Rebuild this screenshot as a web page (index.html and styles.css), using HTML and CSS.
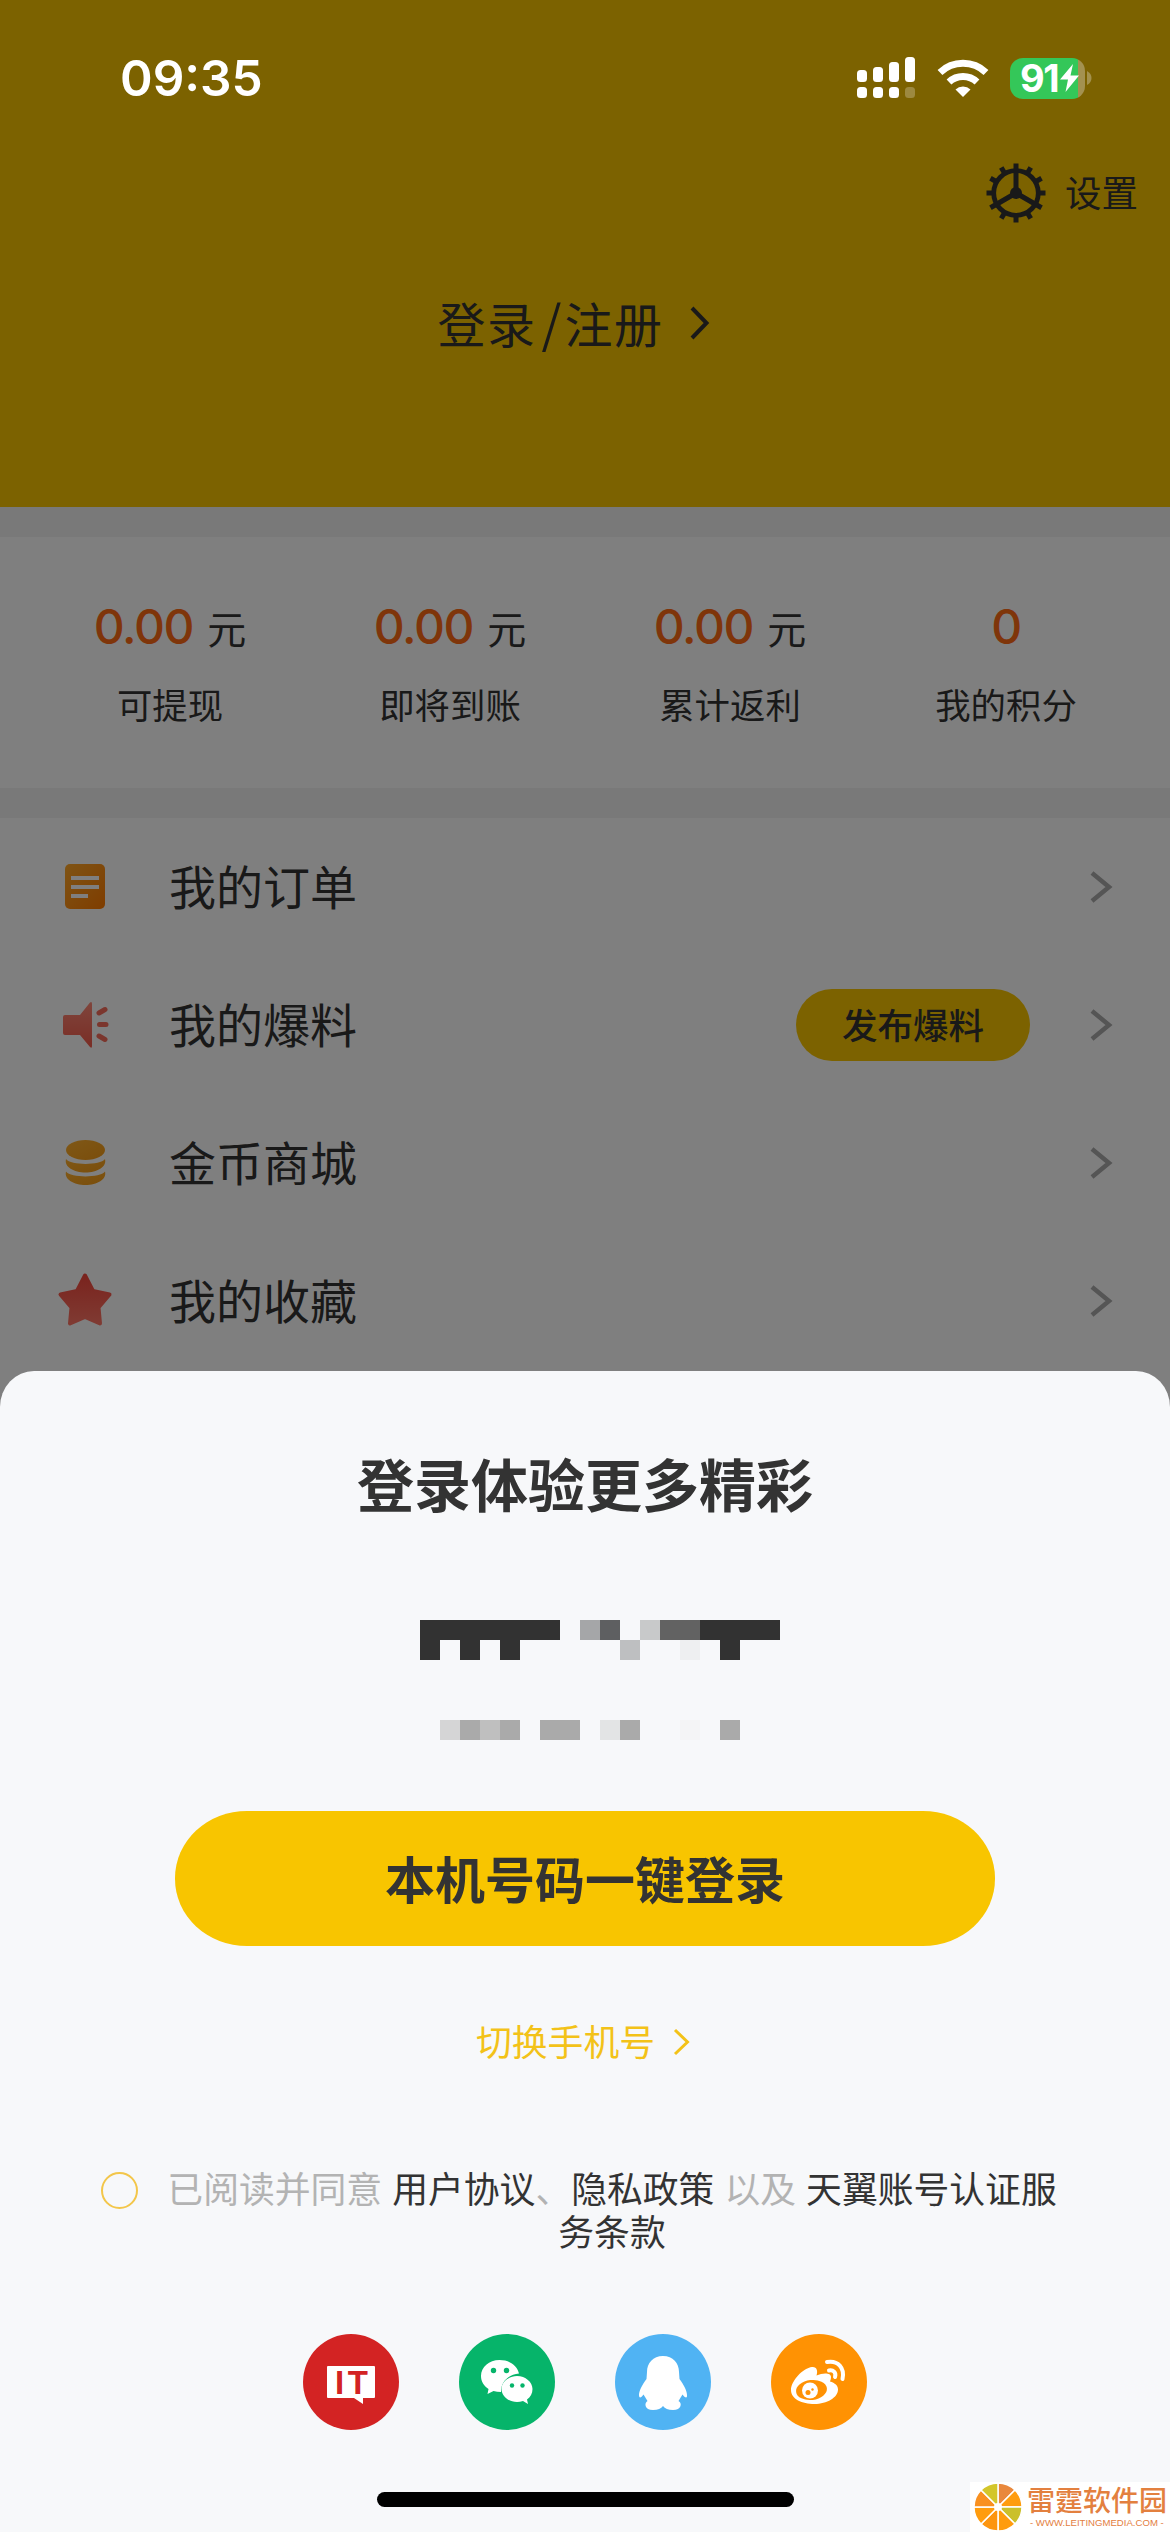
FILE: index.html
```html
<!DOCTYPE html>
<html lang="zh-CN">
<head>
<meta charset="utf-8">
<title>我的</title>
<link rel="stylesheet" href="styles.css">
</head>
<body>
<div class="phone">
  <main class="page">
    <header class="profile">
      <div class="settings">
        <svg class="gear" width="60" height="60" viewBox="-30 -30 60 60">
          <circle r="22.3" fill="none" stroke="#333" stroke-width="4.8"/>
          <g stroke="#333" stroke-width="5">
            <path d="M0-23V-29.5M0 23V29.5M23 0H29.5M-23 0H-29.5"/>
            <path transform="rotate(30)" d="M0-23V-29.5M0 23V29.5M23 0H29.5M-23 0H-29.5"/>
            <path transform="rotate(60)" d="M0-23V-29.5M0 23V29.5M23 0H29.5M-23 0H-29.5"/>
            <path d="M0 0V-22M0 0L19 11M0 0L-19 11"/>
          </g>
          <circle r="6" fill="#333"/>
        </svg>
        <span>设置</span>
      </div>
      <div class="login">
        <span>登录<i class="slash">/</i>注册</span>
        <svg width="20" height="34" viewBox="0 0 20 34"><path d="M2 2L16.500 17L2 32" fill="none" stroke="#333" stroke-width="4"/></svg>
      </div>
    </header>
    <section class="stats">
      <div class="stat"><p class="amount">0.00<small>元</small></p><p class="label">可提现</p></div>
      <div class="stat"><p class="amount">0.00<small>元</small></p><p class="label">即将到账</p></div>
      <div class="stat"><p class="amount">0.00<small>元</small></p><p class="label">累计返利</p></div>
      <div class="stat"><p class="amount">0</p><p class="label">我的积分</p></div>
    </section>
    <nav class="menu">
      <div class="row">
        <svg class="icon" width="60" height="60" viewBox="0 0 60 60">
          <defs><linearGradient id="doc" x1="0" y1="0" x2="1" y2="1"><stop offset="0" stop-color="#ffa829"/><stop offset="1" stop-color="#ff7a00"/></linearGradient></defs>
          <rect x="10" y="7" width="40" height="45" rx="5" fill="url(#doc)"/>
          <path d="M16 21H44M16 30H44M16 39H33" stroke="#fff" stroke-width="4"/>
        </svg>
        <span class="name">我的订单</span>
        <svg class="arrow" width="24" height="34" viewBox="0 0 24 34"><path d="M2 3L19 17L2 31" fill="none" stroke="#aaa" stroke-width="4.500"/></svg>
      </div>
      <div class="row">
        <svg class="icon" width="60" height="60" viewBox="0 0 60 60">
          <defs><linearGradient id="horn" x1="0" y1="0" x2="0" y2="1"><stop offset="0" stop-color="#ff8a78"/><stop offset="1" stop-color="#f45b4b"/></linearGradient></defs>
          <path d="M10 20H25L35 7.500Q37 6 37 9V51Q37 54 35 52L25 40H10Q8 40 8 38V22Q8 20 10 20Z" fill="url(#horn)"/>
          <path d="M44 18L50 14.500M44.500 29.500H51M44 41L50 44.500" stroke="#f76d5b" stroke-width="5" stroke-linecap="round"/>
        </svg>
        <span class="name">我的爆料</span>
        <button class="publish">发布爆料</button>
        <svg class="arrow" width="24" height="34" viewBox="0 0 24 34"><path d="M2 3L19 17L2 31" fill="none" stroke="#aaa" stroke-width="4.500"/></svg>
      </div>
      <div class="row">
        <svg class="icon" width="60" height="60" viewBox="0 0 60 60">
          <defs><linearGradient id="coin" x1="0" y1="0" x2="1" y2="1"><stop offset="0" stop-color="#ffb02e"/><stop offset="1" stop-color="#f59b16"/></linearGradient></defs>
          <g fill="url(#coin)">
            <ellipse cx="30.500" cy="17" rx="19.500" ry="10"/>
            <path d="M11 26C16 32.500 45 32.500 50 26C52 34 42 39.500 30.500 39.500S9 34 11 26Z"/>
            <path d="M11 38.500C16 45 45 45 50 38.500C52 46.500 42 52 30.500 52S9 46.500 11 38.500Z"/>
          </g>
        </svg>
        <span class="name">金币商城</span>
        <svg class="arrow" width="24" height="34" viewBox="0 0 24 34"><path d="M2 3L19 17L2 31" fill="none" stroke="#aaa" stroke-width="4.500"/></svg>
      </div>
      <div class="row">
        <svg class="icon" width="60" height="60" viewBox="0 0 60 60">
          <defs><linearGradient id="star" x1="0" y1="0" x2="0" y2="1"><stop offset="0" stop-color="#f4473c"/><stop offset="1" stop-color="#ff7565"/></linearGradient></defs>
          <path d="M30 4.500L38 20L54.500 23.500L43.500 36.500L45 52.500L30 46L15 52.500L16.500 36.500L5.500 23.500L22 20Z" fill="url(#star)" stroke="url(#star)" stroke-width="4" stroke-linejoin="round"/>
        </svg>
        <span class="name">我的收藏</span>
        <svg class="arrow" width="24" height="34" viewBox="0 0 24 34"><path d="M2 3L19 17L2 31" fill="none" stroke="#aaa" stroke-width="4.500"/></svg>
      </div>
    </nav>
  </main>

  <div class="scrim"></div>

  <div class="statusbar">
    <span class="clock">09:35</span>
    <svg class="signal" width="60" height="42" viewBox="0 0 60 42" fill="#fff">
      <rect x="0" y="13" width="10" height="12" rx="3.500"/><rect x="16" y="10" width="10" height="15" rx="3.500"/><rect x="32" y="5" width="10" height="20" rx="3.500"/><rect x="48" y="0" width="10" height="25" rx="3.500"/>
      <rect x="0" y="30" width="10" height="11" rx="3.500"/><rect x="16" y="30" width="10" height="11" rx="3.500"/><rect x="32" y="30" width="10" height="11" rx="3.500"/><rect x="48" y="30" width="10" height="11" rx="3.500" opacity=".25"/>
    </svg>
    <svg class="wifi" width="52" height="40" viewBox="0 0 52 40">
      <g fill="none" stroke="#fff" stroke-width="7">
        <path d="M3 14.500A33.500 33.500 0 0 1 49 14.500"/>
        <path d="M12 24A20.500 20.500 0 0 1 40 24"/>
      </g>
      <path d="M26 39L18.500 31.500A11 11 0 0 1 33.500 31.500Z" fill="#fff"/>
    </svg>
    <div class="battery">
      <span>91</span>
      <svg width="19" height="28" viewBox="0 0 19 28"><path d="M13 0L0 15.500H8L5.500 28L19 11.500H10.500Z" fill="#fff"/></svg>
    </div>
    <svg class="tip" width="5" height="14" viewBox="0 0 5 14"><path d="M0 0Q4.500 2.500 4.500 7T0 14Z" fill="#fff" opacity=".3"/></svg>
  </div>

  <section class="sheet">
    <h1>登录体验更多精彩</h1>
    <svg class="mosaic" width="360" height="120" viewBox="0 0 18 6" shape-rendering="crispEdges">
      <path fill="#323232" d="M0 0H7V1H5V2H4V1H3V2H2V1H1V2H0ZM14 0H18V1H16V2H15V1H14Z"/>
      <path fill="#a5a6a8" d="M8 0H9V1H8Z"/><path fill="#5e5f61" d="M9 0H10V1H9Z"/>
      <path fill="#c8c9ca" d="M11 0H12V1H11Z"/><path fill="#626262" d="M12 0H14V1H12Z"/>
      <path fill="#bebfc1" d="M10 1H11V2H10Z"/><path fill="#eeeff1" d="M13 1H14V2H13Z"/>
      <path fill="#d5d5d6" d="M1 5H2V6H1Z"/><path fill="#aaa" d="M2 5H3V6H2ZM4 5H5V6H4ZM6 5H8V6H6ZM10 5H11V6H10ZM15 5H16V6H15Z"/>
      <path fill="#bfbfbf" d="M3 5H4V6H3Z"/><path fill="#e3e4e5" d="M9 5H10V6H9Z"/><path fill="#f4f4f6" d="M13 5H14V6H13Z"/>
    </svg>
    <button class="primary">本机号码一键登录</button>
    <div class="switch">
      <span>切换手机号</span>
      <svg width="18" height="28" viewBox="0 0 18 28"><path d="M2 2L14.500 14L2 26" fill="none" stroke="#f3c218" stroke-width="3"/></svg>
    </div>
    <div class="agree">
      <span class="radio"></span>
      <p>已阅读并同意 <a>用户协议</a>、<a>隐私政策</a> 以及 <a>天翼账号认证服务条款</a></p>
    </div>
    <div class="social">
      <svg width="96" height="96" viewBox="0 0 96 96">
        <circle cx="48" cy="48" r="48" fill="#d32323"/>
        <path d="M25 32H71Q72 32 72 33V63Q72 64 71 64H60V70L51 64H25Q24 64 24 63V33Q24 32 25 32Z" fill="#fff"/>
        <text class="it" x="32" y="60" textLength="33" lengthAdjust="spacing">IT</text>
      </svg>
      <svg width="96" height="96" viewBox="0 0 96 96">
        <circle cx="48" cy="48" r="48" fill="#06b46a"/>
        <g fill="#fff"><path d="M40.500 26C30 26 22 33 22 42C22 47.500 25 52 29.500 55L28.500 60L34.500 57Q38 58 42 58C42 47 50 40.500 60 39.500C58 31.500 50.500 26 40.500 26Z"/>
        <path d="M58 42C49.500 42 42.500 48 42.500 55S49.500 68 58 68Q61 68 64 67L69 70L68 65.500C71.500 63 73.500 59.500 73.500 55C73.500 48 66.500 42 58 42Z"/></g>
        <g fill="#06b46a"><circle cx="34.500" cy="36.500" r="2.700"/><circle cx="47.500" cy="36.500" r="2.700"/><circle cx="53" cy="51.500" r="2.200"/><circle cx="63.500" cy="51.500" r="2.200"/></g>
      </svg>
      <svg width="96" height="96" viewBox="0 0 96 96">
        <circle cx="48" cy="48" r="48" fill="#50b3f3"/>
        <path d="M48 22C38 22 32 29 32 38L31.500 45C27 51 24 57 24 61C24 64.500 26 64 28.500 60.500L32.500 67C29 69 29.500 76 38 76C43 76 46 74.500 48 72C50 74.500 53 76 58 76C66.500 76 67.500 69 63.500 67L67.500 60.500C70 64 72.500 64.500 72 61C72 57 69 51 64.500 45L64 38C64 29 58 22 48 22Z" fill="#fff"/>
      </svg>
      <svg width="96" height="96" viewBox="0 0 96 96">
        <circle cx="48" cy="48" r="48" fill="#ff9203"/>
        <path fill="#fff" d="M20 56C20 47 32 34 41 33C46 32.500 47 37 45.500 41.500C52 38.500 60 38.500 60 43Q60 45.500 59 47.500C64 49 67 51.500 67 55.500C67 63.500 56 70 43.500 70S20 65 20 56Z"/>
        <ellipse cx="40.500" cy="56" rx="15.500" ry="10" fill="#ff9203" transform="rotate(-7 40.500 56)"/>
        <circle cx="39" cy="56.500" r="8" fill="#fff"/>
        <circle cx="37" cy="58.500" r="2.500" fill="#ff9203"/><circle cx="41.500" cy="55.500" r="1.200" fill="#ff9203"/>
        <path d="M56 28C67 26 74 34 71.500 45M58 36.500C62 35.500 65.500 38.500 64 43" fill="none" stroke="#fff" stroke-width="4" stroke-linecap="round"/>
      </svg>
    </div>
    <div class="home"></div>
  </section>

  <aside class="watermark">
    <svg width="48" height="48" viewBox="-24 -24 48 48">
      <g stroke="#fff" stroke-width="1.500">
        <path d="M0 0V-24A24 24 0 0 1 17-17Z" fill="#e9883c"/>
        <path transform="rotate(45)" d="M0 0V-24A24 24 0 0 1 17-17Z" fill="#ff9c0e"/>
        <path transform="rotate(90)" d="M0 0V-24A24 24 0 0 1 17-17Z" fill="#cbc02b"/>
        <path transform="rotate(135)" d="M0 0V-24A24 24 0 0 1 17-17Z" fill="#ff9c0e"/>
        <path transform="rotate(180)" d="M0 0V-24A24 24 0 0 1 17-17Z" fill="#fd950f"/>
        <path transform="rotate(225)" d="M0 0V-24A24 24 0 0 1 17-17Z" fill="#ff9c0e"/>
        <path transform="rotate(270)" d="M0 0V-24A24 24 0 0 1 17-17Z" fill="#f99020"/>
        <path transform="rotate(315)" d="M0 0V-24A24 24 0 0 1 17-17Z" fill="#d3c62a"/>
      </g>
      <circle r="4" fill="#fff"/>
    </svg>
    <div class="brand"><b>雷霆软件园</b><small>- WWW.LEITINGMEDIA.COM -</small></div>
  </aside>
</div>
</body>
</html>
```

FILE: styles.css
```css
* { box-sizing: border-box; }
body, p, h1 { margin: 0; }
body { font-family: Inter, "Noto Sans CJK SC", sans-serif; color: #333; }
svg { display: block; flex: none; }
button { border: 0; font: inherit; color: inherit; padding: 0; }

.phone { position: relative; width: 1170px; height: 2532px; overflow: hidden; background: #fff; }

.profile { height: 507px; padding-top: 162px; background: #f8c500; }
.settings { display: flex; align-items: center; justify-content: flex-end; gap: 19px; height: 62px; padding-right: 32px; font-size: 36.500px; }
.settings span { padding-bottom: 3px; }
.login { display: flex; align-items: center; justify-content: center; gap: 26px; height: 70px; margin-top: 66px; padding-right: 23px; font-size: 48px; letter-spacing: 1.500px; }
.login span { padding-bottom: 6px; }
.login svg { margin-top: -4px; }
.slash { margin: 0 3px 0 5px; font-style: normal; font-size: 51px; line-height: 48px; font-family: "Noto Sans CJK SC", sans-serif; letter-spacing: 0; }

.stats { display: flex; height: 311px; padding: 60px 30px 0; border-top: 30px solid #f3f3f3; border-bottom: 30px solid #f3f3f3; }
.stat { flex: none; width: 280px; text-align: center; }
.stat:last-child { width: 272px; }
.amount { height: 60px; line-height: 60px; font-size: 48px; font-weight: 500; letter-spacing: -1.400px; color: #ff6a14; }
.amount small { margin-left: 14px; font-size: 39px; font-weight: 400; letter-spacing: 0; color: #333; }
.label { margin-top: 24px; height: 52px; line-height: 52px; font-size: 35.400px; }

.row { display: flex; align-items: center; height: 138px; padding: 0 56px 0 55px; }
.name { flex: 1; margin-left: 54px; padding-bottom: 6px; font-size: 47px; }
.publish { width: 234px; height: 72px; margin-right: 60px; padding-bottom: 3px; border-radius: 36px; background: #f8c500; font-size: 35.500px; font-weight: 500; }

.scrim { position: absolute; inset: 0; background: rgba(0, 0, 0, .5); }

.statusbar { position: absolute; top: 0; left: 0; right: 0; display: flex; align-items: center; height: 156px; padding: 0 78px 0 120px; color: #fff; }
.clock { flex: 1; font-size: 49.500px; font-weight: 600; }
.wifi { margin-left: 20px; }
.battery { display: flex; align-items: center; gap: 2px; width: 75px; height: 41px; margin-left: 21px; padding-left: 10px; border-radius: 13px; background: linear-gradient(90deg, #34c759 68px, #a39150 68px); font-size: 38px; font-weight: 700; letter-spacing: -1.500px; }
.tip { margin-left: 2px; }

.sheet { position: absolute; left: 0; right: 0; bottom: 0; height: 1161px; padding-top: 78px; border-radius: 34px 34px 0 0 / 36px 36px 0 0; background: #f7f8fa; display: flex; flex-direction: column; align-items: center; }
h1 { height: 76px; line-height: 76px; font-size: 57px; font-weight: 700; }
.mosaic { margin: 95px 0 71px 30px; }
.primary { width: 820px; height: 135px; padding-bottom: 4px; border-radius: 72px / 67px; background: #f8c500; font-size: 50px; font-weight: 700; }
.switch { display: flex; align-items: center; gap: 18px; height: 56px; margin-top: 68px; padding-right: 3px; font-size: 35.800px; color: #f3c218; }
.switch span { padding-bottom: 4px; }
.agree { display: flex; align-self: stretch; gap: 28px; margin: 99px 100px 0 101px; }
.radio { flex: none; width: 37px; height: 37px; margin-top: 3px; border: 2px solid #f3c64a; border-radius: 50%; }
.agree p { width: 892px; text-align: center; font-size: 35.800px; line-height: 43px; color: #b3b3b3; }
.agree a { color: #333; }
.social { display: flex; gap: 60px; margin-top: 79px; }
.it { font: 700 33px "Liberation Sans", sans-serif; fill: #d32323; }
.home { width: 417px; height: 15px; margin-top: 62px; border-radius: 8px; background: #000; }

.watermark { position: absolute; right: 0; bottom: 0; display: flex; align-items: center; gap: 5px; width: 200px; height: 50px; padding-left: 4px; background: #fff; color: #e3803f; }
.brand { display: flex; flex-direction: column; }
.brand b { font-size: 28px; line-height: 32px; font-weight: 500; }
.brand small { font: 9.600px/12px "Liberation Sans", sans-serif; margin-left: 3px; white-space: nowrap; }
```
